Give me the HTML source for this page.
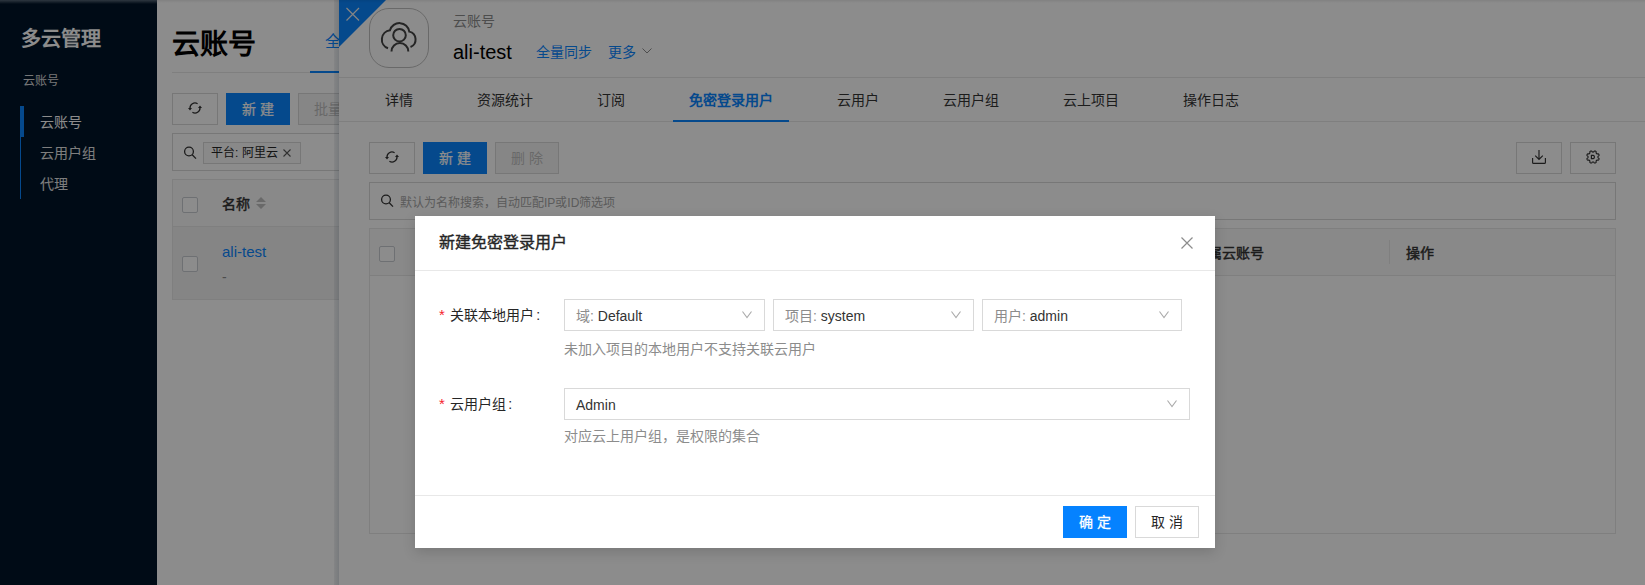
<!DOCTYPE html>
<html lang="zh-CN"><head><meta charset="utf-8">
<style>
*{box-sizing:border-box;margin:0;padding:0}
html,body{width:1645px;height:585px;overflow:hidden;background:#fff;font-family:"Liberation Sans",sans-serif;color:#262626}
.abs{position:absolute}
.t{position:absolute;white-space:nowrap;line-height:1}
svg{position:absolute;overflow:visible}
#side{left:0;top:0;width:157px;height:585px;background:#001529}
#main{left:157px;top:0;width:1488px;height:585px;background:#fff}
.btn{position:absolute;border:1px solid #d9d9d9;background:#fff;font-size:14px;text-align:center;white-space:nowrap}
.bp{background:#0a86ff;border-color:#0a86ff;color:#fff}
.bd{background:#f5f5f5;color:#bfbfbf}
#drawer{left:339px;top:0;width:1306px;height:585px;background:#fff}
#dshadow{left:334px;top:0;width:5px;height:585px;background:linear-gradient(to right,rgba(0,30,60,.06),rgba(0,30,60,.14))}
#mask{left:0;top:0;width:1645px;height:585px;background:rgba(0,0,0,.45)}
#modal{left:415px;top:216px;width:800px;height:332px;background:#fff;box-shadow:0 4px 12px rgba(0,0,0,.15)}
.sel{position:absolute;border:1px solid #d9d9d9;height:32px;font-size:14px;color:#333}
.sel .tx{position:absolute;left:11px;top:7.5px;line-height:16px;white-space:nowrap}
.sel .lb{color:#8c8c8c}
.help{position:absolute;font-size:14px;color:#8c8c8c;line-height:1;white-space:nowrap}
.lab{position:absolute;font-size:14px;color:#262626;line-height:1;white-space:nowrap}
.lab i{font-style:normal;color:#f5222d;margin-right:5.5px;font-size:15px}
.tabs{position:absolute;left:30px;top:78px;height:44px;display:flex}
.tab{padding:0 16px;margin-right:32px;font-size:14px;line-height:44px;color:#333;position:relative}
.tab.on{color:#0a86ff;font-weight:bold}
.tab.on:after{content:"";position:absolute;left:0;right:0;bottom:0;height:2px;background:#0a86ff}
.cb{position:absolute;width:16px;height:16px;border:1px solid #c8ccd2;border-radius:2px;background:#fff}
</style></head><body>
<div id="side" class="abs">
  <div class="t" style="left:21px;top:29px;font-size:20px;font-weight:bold;color:#fff">多云管理</div>
  <div class="t" style="left:23px;top:75px;font-size:12px;color:#d9d9d9">云账号</div>
  <div class="abs" style="left:20px;top:106px;width:1px;height:93px;background:#0a86ff"></div>
  <div class="abs" style="left:20px;top:106px;width:4px;height:31px;background:#0a86ff"></div>
  <div class="t" style="left:40px;top:115px;font-size:14px;color:#fff">云账号</div>
  <div class="t" style="left:40px;top:146px;font-size:14px;color:#e6e6e6">云用户组</div>
  <div class="t" style="left:40px;top:177px;font-size:14px;color:#e6e6e6">代理</div>
</div>
<div id="main" class="abs">
  <div class="t" style="left:15px;top:31px;font-size:28px;font-weight:bold;color:#000">云账号</div>
  <div class="t" style="left:168px;top:34px;font-size:16px;color:#0a86ff">全部</div>
  <div class="abs" style="left:15px;top:72px;width:1400px;height:1px;background:#e8e8e8"></div>
  <div class="abs" style="left:153px;top:71px;width:80px;height:2px;background:#0a86ff"></div>
  <div class="btn" style="left:15px;top:93px;width:46px;height:32px"></div>
  <svg style="left:31px;top:102px" width="14" height="12" viewBox="0 0 14 12"><path d="M2 6.4 A5 5 0 0 1 9.6 1.7 M12 5.6 A5 5 0 0 1 4.4 10.3" fill="none" stroke="#333" stroke-width="1.3"/><path d="M0 6 L4 6 L2 8.4Z M10 6 L14 6 L12 3.6Z" fill="#333"/></svg>
  <div class="btn bp" style="left:69px;top:93px;width:64px;height:32px;line-height:30px;letter-spacing:4px;text-indent:4px;-webkit-text-stroke:0.25px #fff">新建</div>
  <div class="btn bd" style="left:141px;top:93px;width:100px;height:32px;line-height:30px;text-align:left;padding-left:15px">批量</div>
  <div class="abs" style="left:15px;top:133px;width:1400px;height:38px;border:1px solid #d9d9d9"></div>
  <svg style="left:25.5px;top:146px" width="14" height="14" viewBox="0 0 14 14"><circle cx="6" cy="5.5" r="4.4" fill="none" stroke="#333" stroke-width="1.3"/><path d="M9.2 8.7 L13 12.6" stroke="#333" stroke-width="1.3"/></svg>
  <div class="abs" style="left:46px;top:142px;width:98px;height:22px;border:1px solid #d9d9d9;background:#fafafa"></div>
  <div class="t" style="left:54px;top:147px;font-size:12px;color:#262626">平台: 阿里云</div>
  <svg style="left:126px;top:149px" width="8" height="8" viewBox="0 0 8 8"><path d="M0.5 0.5 L7.5 7.5 M7.5 0.5 L0.5 7.5" stroke="#595959" stroke-width="1.1"/></svg>
  <div class="abs" style="left:15px;top:179px;width:1400px;height:121px;border:1px solid #e8e8e8"></div>
  <div class="abs" style="left:16px;top:180px;width:1398px;height:47px;background:#fafafa;border-bottom:1px solid #e8e8e8"></div>
  <div class="abs" style="left:16px;top:227px;width:1398px;height:72px;background:#f2f2f2"></div>
  <div class="cb" style="left:25px;top:197px"></div>
  <div class="cb" style="left:25px;top:256px"></div>
  <div class="t" style="left:65px;top:197px;font-size:14px;color:#333;-webkit-text-stroke:0.45px #333">名称</div>
  <svg style="left:99px;top:197px" width="11" height="13" viewBox="0 0 11 13"><path d="M5 0 L10 5 L0 5Z M5 12 L10 7 L0 7Z" fill="#bfbfbf"/></svg>
  <div class="t" style="left:65px;top:244px;font-size:15px;color:#0a86ff">ali-test</div>
  <div class="t" style="left:65px;top:270px;font-size:14px;color:#8c8c8c">-</div>
</div>
<div id="dshadow" class="abs"></div>
<div id="drawer" class="abs">
  <svg style="left:0;top:0" width="47" height="47" viewBox="0 0 47 47"><path d="M0 0 H47 L0 47Z" fill="#0a86ff"/><path d="M7.5 8 L20 20.5 M20 8 L7.5 20.5" stroke="#f0f0f0" stroke-width="1.2"/></svg>
  <div class="abs" style="left:30px;top:8px;width:60px;height:60px;border:1px solid #c0c0c0;border-radius:20px;background:#fff"></div>
  <svg style="left:0;top:0" width="100" height="70" viewBox="339 0 100 70"><g fill="none" stroke="#444" stroke-width="2"><path d="M388 48.3 A9.3 9.3 0 0 1 389.97 30.33 A9.9 9.9 0 0 1 409.3 31.6 A8.1 8.1 0 0 1 410.5 47"/><circle cx="399.5" cy="35.2" r="6.3"/><path d="M391.5 51.5 A8.4 8.4 0 0 1 408.3 51.5"/></g></svg>
  <div class="t" style="left:114px;top:14px;font-size:14px;color:#8c8c8c">云账号</div>
  <div class="t" style="left:114px;top:42px;font-size:20px;color:#000">ali-test</div>
  <div class="t" style="left:197px;top:45px;font-size:14px;color:#0a86ff">全量同步</div>
  <div class="t" style="left:269px;top:45px;font-size:14px;color:#0a86ff">更多</div>
  <svg style="left:303px;top:48px" width="10" height="6" viewBox="0 0 10 6"><path d="M0.5 0.5 L5 5 L9.5 0.5" fill="none" stroke="#8c8c8c" stroke-width="1"/></svg>
  <div class="abs" style="left:0;top:77px;width:1306px;height:1px;background:#e8e8e8"></div>
  <div class="abs" style="left:0;top:121px;width:1306px;height:1px;background:#e8e8e8"></div>
  <div class="tabs">
    <div class="tab">详情</div><div class="tab">资源统计</div><div class="tab">订阅</div><div class="tab on">免密登录用户</div><div class="tab">云用户</div><div class="tab">云用户组</div><div class="tab">云上项目</div><div class="tab">操作日志</div>
  </div>
  <div class="btn" style="left:30px;top:142px;width:46px;height:32px"></div>
  <svg style="left:46px;top:151px" width="14" height="12" viewBox="0 0 14 12"><path d="M2 6.4 A5 5 0 0 1 9.6 1.7 M12 5.6 A5 5 0 0 1 4.4 10.3" fill="none" stroke="#333" stroke-width="1.3"/><path d="M0 6 L4 6 L2 8.4Z M10 6 L14 6 L12 3.6Z" fill="#333"/></svg>
  <div class="btn bp" style="left:84px;top:142px;width:64px;height:32px;line-height:30px;letter-spacing:4px;text-indent:4px;-webkit-text-stroke:0.25px #fff">新建</div>
  <div class="btn bd" style="left:156px;top:142px;width:64px;height:32px;line-height:30px;letter-spacing:4px;text-indent:4px">删除</div>
  <div class="btn" style="left:1177px;top:142px;width:46px;height:32px"></div>
  <svg style="left:1193px;top:150px" width="14" height="14" viewBox="0 0 14 14"><path d="M7 0 V9.2 M3.2 5.6 L7 9.4 L10.8 5.6" fill="none" stroke="#333" stroke-width="1.15"/><path d="M0.6 8 V12.4 Q0.6 13.4 1.6 13.4 H12.4 Q13.4 13.4 13.4 12.4 V8" fill="none" stroke="#333" stroke-width="1.15"/></svg>
  <div class="btn" style="left:1231px;top:142px;width:46px;height:32px"></div>
  <svg style="left:1247px;top:150px" width="14" height="14" viewBox="0 0 14 14"><path d="M7.00 2.05 L7.19 2.05 L7.39 2.04 L7.59 2.00 L7.82 1.84 L8.10 1.46 L8.42 1.09 L8.70 0.97 L8.96 0.98 L9.20 1.05 L9.43 1.13 L9.66 1.24 L9.87 1.36 L10.06 1.53 L10.17 1.82 L10.14 2.30 L10.07 2.77 L10.12 3.05 L10.23 3.22 L10.36 3.36 L10.50 3.50 L10.64 3.64 L10.78 3.77 L10.95 3.88 L11.23 3.93 L11.70 3.86 L12.18 3.83 L12.47 3.94 L12.64 4.13 L12.76 4.34 L12.87 4.57 L12.95 4.80 L13.02 5.04 L13.03 5.30 L12.91 5.58 L12.54 5.90 L12.16 6.18 L12.00 6.41 L11.96 6.61 L11.95 6.81 L11.95 7.00 L11.95 7.19 L11.96 7.39 L12.00 7.59 L12.16 7.82 L12.54 8.10 L12.91 8.42 L13.03 8.70 L13.02 8.96 L12.95 9.20 L12.87 9.43 L12.76 9.66 L12.64 9.87 L12.47 10.06 L12.18 10.17 L11.70 10.14 L11.23 10.07 L10.95 10.12 L10.78 10.23 L10.64 10.36 L10.50 10.50 L10.36 10.64 L10.23 10.78 L10.12 10.95 L10.07 11.23 L10.14 11.70 L10.17 12.18 L10.06 12.47 L9.87 12.64 L9.66 12.76 L9.43 12.87 L9.20 12.95 L8.96 13.02 L8.70 13.03 L8.42 12.91 L8.10 12.54 L7.82 12.16 L7.59 12.00 L7.39 11.96 L7.19 11.95 L7.00 11.95 L6.81 11.95 L6.61 11.96 L6.41 12.00 L6.18 12.16 L5.90 12.54 L5.58 12.91 L5.30 13.03 L5.04 13.02 L4.80 12.95 L4.57 12.87 L4.34 12.76 L4.13 12.64 L3.94 12.47 L3.83 12.18 L3.86 11.70 L3.93 11.23 L3.88 10.95 L3.77 10.78 L3.64 10.64 L3.50 10.50 L3.36 10.36 L3.22 10.23 L3.05 10.12 L2.77 10.07 L2.30 10.14 L1.82 10.17 L1.53 10.06 L1.36 9.87 L1.24 9.66 L1.13 9.43 L1.05 9.20 L0.98 8.96 L0.97 8.70 L1.09 8.42 L1.46 8.10 L1.84 7.82 L2.00 7.59 L2.04 7.39 L2.05 7.19 L2.05 7.00 L2.05 6.81 L2.04 6.61 L2.00 6.41 L1.84 6.18 L1.46 5.90 L1.09 5.58 L0.97 5.30 L0.98 5.04 L1.05 4.80 L1.13 4.57 L1.24 4.34 L1.36 4.13 L1.53 3.94 L1.82 3.83 L2.30 3.86 L2.77 3.93 L3.05 3.88 L3.22 3.77 L3.36 3.64 L3.50 3.50 L3.64 3.36 L3.77 3.22 L3.88 3.05 L3.93 2.77 L3.86 2.30 L3.83 1.82 L3.94 1.53 L4.13 1.36 L4.34 1.24 L4.57 1.13 L4.80 1.05 L5.04 0.98 L5.30 0.97 L5.58 1.09 L5.90 1.46 L6.18 1.84 L6.41 2.00 L6.61 2.04 L6.81 2.05Z" fill="none" stroke="#333" stroke-width="1.15"/><path d="M5.4 5.3 H7.2 A1.8 1.8 0 0 1 7.2 8.7 H5.4Z" fill="none" stroke="#333" stroke-width="1.2"/></svg>
  <div class="abs" style="left:30px;top:182px;width:1247px;height:38px;border:1px solid #d9d9d9"></div>
  <svg style="left:41px;top:194px" width="14" height="14" viewBox="0 0 14 14"><circle cx="6" cy="5.5" r="4.4" fill="none" stroke="#333" stroke-width="1.3"/><path d="M9.2 8.7 L13 12.6" stroke="#333" stroke-width="1.3"/></svg>
  <div class="t" style="left:61px;top:197px;font-size:12px;color:#a6a6a6">默认为名称搜索，自动匹配IP或ID筛选项</div>
  <div class="abs" style="left:30px;top:228px;width:1247px;height:306px;border:1px solid #e8e8e8"></div>
  <div class="abs" style="left:31px;top:229px;width:1245px;height:47px;background:#fafafa;border-bottom:1px solid #e8e8e8"></div>
  <div class="cb" style="left:40px;top:246px"></div>
  <div class="t" style="left:855px;top:245.5px;font-size:14px;color:#333;-webkit-text-stroke:0.45px #333">所属云账号</div>
  <div class="abs" style="left:1050px;top:240px;width:1px;height:24px;background:#e8e8e8"></div>
  <div class="t" style="left:1067px;top:245.5px;font-size:14px;color:#333;-webkit-text-stroke:0.45px #333">操作</div>
</div>
<div id="mask" class="abs"></div>
<div class="abs" style="left:0;top:0;width:157px;height:4px;background:linear-gradient(rgba(255,255,255,.18),rgba(255,255,255,0))"></div>
<div class="abs" style="left:157px;top:0;width:1488px;height:3px;background:linear-gradient(rgba(0,0,0,.08),rgba(0,0,0,0))"></div>
<div id="modal" class="abs">
  <div class="t" style="left:24px;top:19px;font-size:16px;color:#262626;-webkit-text-stroke:0.4px #262626">新建免密登录用户</div>
  <svg style="left:766px;top:21px" width="12" height="12" viewBox="0 0 12 12"><path d="M0.5 0.5 L11.5 11.5 M11.5 0.5 L0.5 11.5" stroke="#8c8c8c" stroke-width="1.2"/></svg>
  <div class="abs" style="left:0;top:54px;width:800px;height:1px;background:#e8e8e8"></div>
  <div class="lab" style="left:24px;top:91px"><i>*</i>关联本地用户<span style="margin-left:2px">:</span></div>
  <div class="sel" style="left:149px;top:83px;width:201px"><span class="tx"><span class="lb">域: </span>Default</span><svg style="right:12px;top:11px" width="10" height="7" viewBox="0 0 10 7"><path d="M0.5 0.5 L5 6.5 L9.5 0.5" fill="none" stroke="#aaa" stroke-width="1.1"/></svg></div>
  <div class="sel" style="left:358px;top:83px;width:201px"><span class="tx"><span class="lb">项目: </span>system</span><svg style="right:12px;top:11px" width="10" height="7" viewBox="0 0 10 7"><path d="M0.5 0.5 L5 6.5 L9.5 0.5" fill="none" stroke="#aaa" stroke-width="1.1"/></svg></div>
  <div class="sel" style="left:567px;top:83px;width:200px"><span class="tx"><span class="lb">用户: </span>admin</span><svg style="right:12px;top:11px" width="10" height="7" viewBox="0 0 10 7"><path d="M0.5 0.5 L5 6.5 L9.5 0.5" fill="none" stroke="#aaa" stroke-width="1.1"/></svg></div>
  <div class="help" style="left:149px;top:126px">未加入项目的本地用户不支持关联云用户</div>
  <div class="lab" style="left:24px;top:180px"><i>*</i>云用户组<span style="margin-left:2px">:</span></div>
  <div class="sel" style="left:149px;top:172px;width:626px"><span class="tx">Admin</span><svg style="right:12px;top:11px" width="10" height="7" viewBox="0 0 10 7"><path d="M0.5 0.5 L5 6.5 L9.5 0.5" fill="none" stroke="#aaa" stroke-width="1.1"/></svg></div>
  <div class="help" style="left:149px;top:213px">对应云上用户组，是权限的集合</div>
  <div class="abs" style="left:0;top:279px;width:800px;height:1px;background:#e8e8e8"></div>
  <div class="btn bp" style="left:648px;top:290px;width:64px;height:32px;line-height:30px;letter-spacing:4px;text-indent:4px;background:#0582ff;border-color:#0582ff;-webkit-text-stroke:0.3px #fff">确定</div>
  <div class="btn" style="left:720px;top:290px;width:64px;height:32px;line-height:30px;letter-spacing:4px;text-indent:4px">取消</div>
</div>
</body></html>
